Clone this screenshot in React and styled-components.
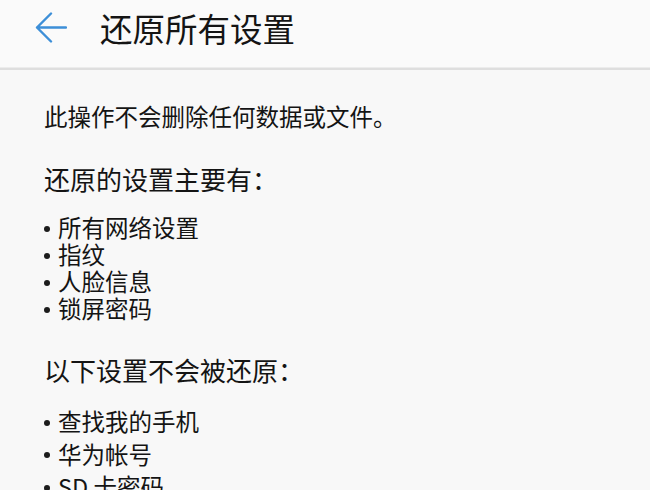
import React from "react";
import styled, { createGlobalStyle } from "styled-components";

const GlobalStyle = createGlobalStyle`
  body {
    margin: 0;
    background: #f8f8f8;
    font-family: "Noto Sans CJK SC", "Noto Sans", sans-serif;
    color: #141414;
  }
`;

const Page = styled.div`
  width: 650px;
  height: 490px;
  overflow: hidden;
  background: #f8f8f8;
`;

const Header = styled.div`
  display: flex;
  align-items: center;
  height: 68px;
  padding-left: 34px;
  box-sizing: border-box;
  padding-bottom: 12px;
  background: #fafafa;
`;

const BackButton = styled.button`
  display: flex;
  align-items: center;
  justify-content: center;
  width: 34px;
  height: 34px;
  padding: 0;
  border: none;
  background: none;
`;

const Title = styled.h1`
  margin: 0 0 0 32px;
  font-size: 32.5px;
  line-height: 40px;
  font-weight: 400;
  color: #141414;
`;

const Divider = styled.div`
  height: 2px;
  background: #dedede;
  box-shadow: 0 -1px 0 #ececec;
`;

const Content = styled.div`
  padding: 30px 0 0 44px;
`;

const Note = styled.p`
  margin: 0;
  font-size: 23.5px;
  line-height: 32px;
`;

const Heading = styled.h2`
  margin: ${(p) => p.$top}px 0 0;
  font-size: 26px;
  line-height: 34px;
  font-weight: 400;
`;

const List = styled.ul`
  margin: ${(p) => p.$top}px 0 0;
  padding: 0;
  list-style: none;
`;

const Item = styled.li`
  display: flex;
  align-items: center;
  font-size: 23.5px;
  line-height: ${(p) => p.$lh}px;

  &::before {
    content: "";
    width: 6px;
    height: 6px;
    border-radius: 50%;
    background: #1c1c1c;
    margin: 3px 8px 0 0;
    flex-shrink: 0;
  }
`;

const BackArrow = () => (
  <svg width="32" height="32" viewBox="0 0 32 32" fill="none">
    <path
      d="M2 15.5H31M16 1.5L2 15.5L16 29.5"
      stroke="#3d8fd8"
      strokeWidth="2.4"
      strokeLinecap="round"
      strokeLinejoin="round"
    />
  </svg>
);

const reset = ["所有网络设置", "指纹", "人脸信息", "锁屏密码"];
const kept = ["查找我的手机", "华为帐号", "SD 卡密码"];

export default function App() {
  return (
    <Page>
      <GlobalStyle />
      <Header>
        <BackButton>
          <BackArrow />
        </BackButton>
        <Title>还原所有设置</Title>
      </Header>
      <Divider />
      <Content>
        <Note>此操作不会删除任何数据或文件。</Note>
        <Heading $top={30}>还原的设置主要有：</Heading>
        <List $top={18}>
          {reset.map((t) => (
            <Item key={t} $lh={27}>
              {t}
            </Item>
          ))}
        </List>
        <Heading $top={31}>以下设置不会被还原：</Heading>
        <List $top={18}>
          {kept.map((t) => (
            <Item key={t} $lh={32.5}>
              {t}
            </Item>
          ))}
        </List>
      </Content>
    </Page>
  );
}
